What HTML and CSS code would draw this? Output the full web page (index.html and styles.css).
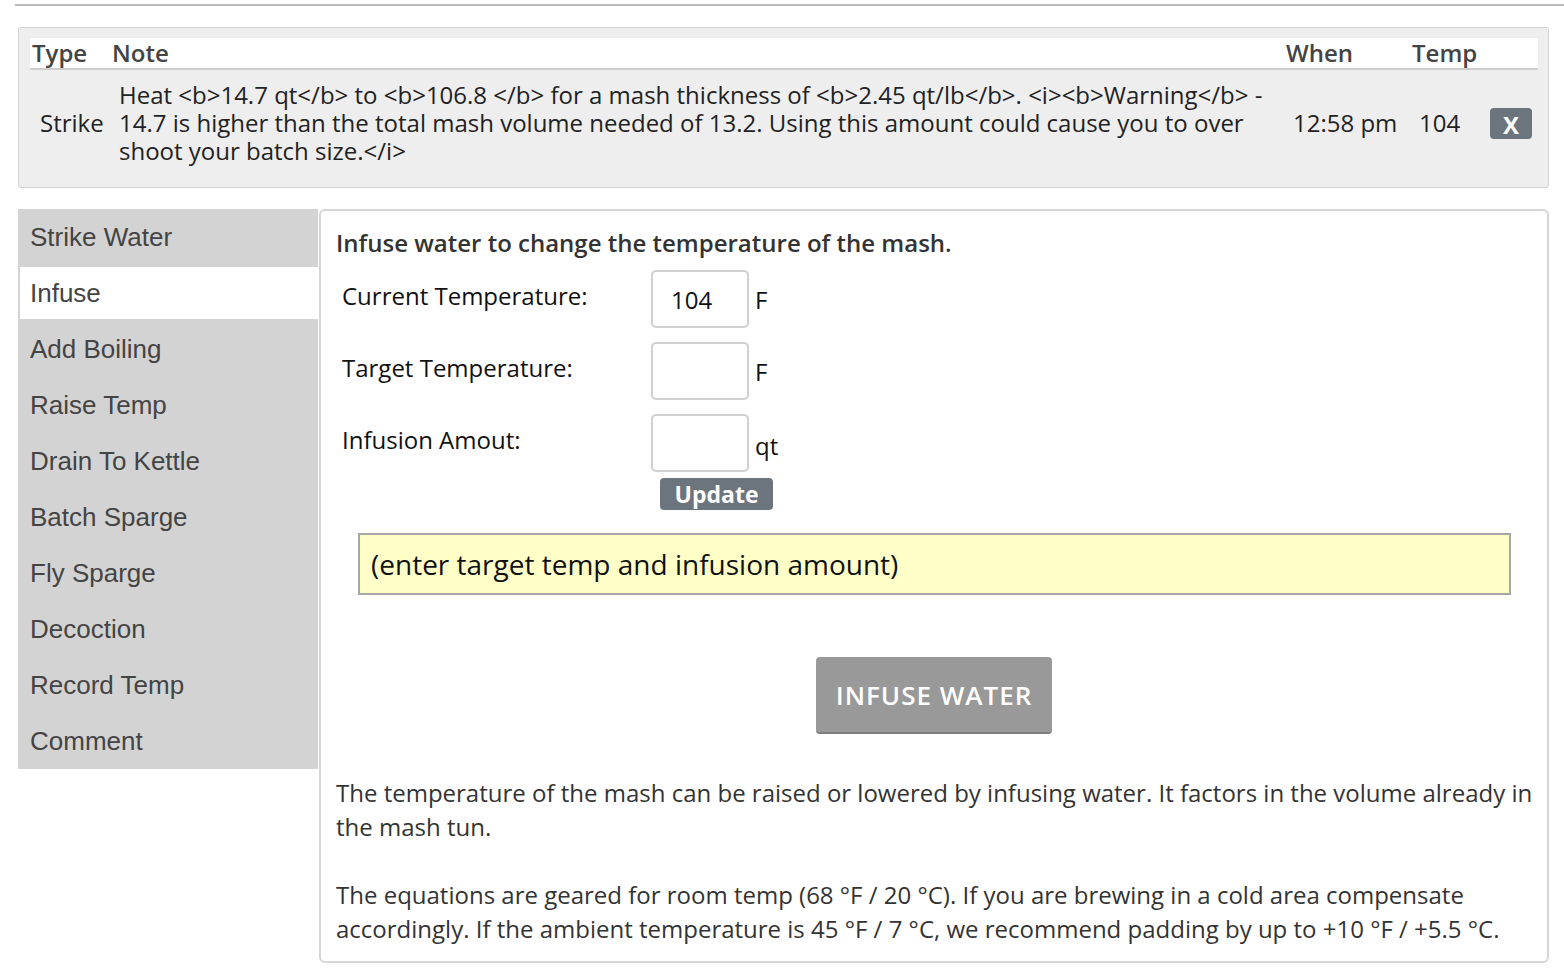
FILE: index.html
```html
<!DOCTYPE html>
<html lang="en">
<head>
    <meta charset="UTF-8">
    <title>Mash Steps</title>
    <link rel="stylesheet" href="styles.css">
</head>
<body>
    <div class="top-rule"></div>

    <!-- Step log -->
    <div class="log">
        <table class="log-table">
            <colgroup>
                <col class="c-type">
                <col class="c-note">
                <col class="c-when">
                <col class="c-temp">
                <col class="c-del">
            </colgroup>
            <thead>
                <tr>
                    <th>Type</th>
                    <th>Note</th>
                    <th>When</th>
                    <th>Temp</th>
                    <th></th>
                </tr>
            </thead>
            <tbody>
                <tr>
                    <td>Strike</td>
                    <td>Heat &lt;b&gt;14.7 qt&lt;/b&gt; to &lt;b&gt;106.8 &lt;/b&gt; for a mash thickness of &lt;b&gt;2.45 qt/lb&lt;/b&gt;. &lt;i&gt;&lt;b&gt;Warning&lt;/b&gt; - 14.7 is higher than the total mash volume needed of 13.2. Using this amount could cause you to over shoot your batch size.&lt;/i&gt;</td>
                    <td>12:58 pm</td>
                    <td>104</td>
                    <td><button type="button" class="del-btn">X</button></td>
                </tr>
            </tbody>
        </table>
    </div>

    <div class="work">
        <!-- Step menu -->
        <ul class="steps">
            <li>Strike Water</li>
            <li class="active">Infuse</li>
            <li>Add Boiling</li>
            <li>Raise Temp</li>
            <li>Drain To Kettle</li>
            <li>Batch Sparge</li>
            <li>Fly Sparge</li>
            <li>Decoction</li>
            <li>Record Temp</li>
            <li>Comment</li>
        </ul>

        <!-- Infuse panel -->
        <div class="panel">
            <h3>Infuse water to change the temperature of the mash.</h3>

            <form class="calc">
                <div class="row">
                    <label for="cur-temp">Current Temperature:</label>
                    <input type="text" id="cur-temp" value="104">
                    <span class="unit">F</span>
                </div>
                <div class="row">
                    <label for="target-temp">Target Temperature:</label>
                    <input type="text" id="target-temp">
                    <span class="unit">F</span>
                </div>
                <div class="row">
                    <label for="amount">Infusion Amout:</label>
                    <input type="text" id="amount">
                    <span class="unit unit-low">qt</span>
                </div>
                <button type="button" class="update-btn">Update</button>
            </form>

            <div class="result">(enter target temp and infusion amount)</div>

            <div class="action">
                <button type="button" class="infuse-btn">INFUSE WATER</button>
            </div>

            <p>The temperature of the mash can be raised or lowered by infusing water. It factors in the volume already in the mash tun.</p>
            <p>The equations are geared for room temp (68 °F / 20 °C). If you are brewing in a cold area compensate accordingly. If the ambient temperature is 45 °F / 7 °C, we recommend padding by up to +10 °F / +5.5 °C.</p>
        </div>
    </div>
</body>
</html>
```

FILE: styles.css
```css
* {
    margin: 0;
    padding: 0;
    box-sizing: border-box;
}

body {
    font-family: "Open Sans", sans-serif;
    font-size: 24px;
    color: #333;
    background: #fff;
    padding: 4px 15px 0 18px;
}

.top-rule {
    border-top: 2px solid #bbb;
    margin-left: -3px;
    margin-right: -15px;
}

/* log table */
.log {
    margin-top: 21px;
    background-color: #eee;
    border: 1px solid #d2d2d2;
    border-radius: 3px;
    padding: 10px 11px;
}

.log-table {
    width: 100%;
    table-layout: fixed;
    border-collapse: collapse;
}

.c-type { width: 80px; }
.c-note { width: 1174px; }
.c-when { width: 126px; }
.c-temp { width: 71px; }
.c-del { width: 57px; }

.log-table th {
    background-color: #fff;
    border-bottom: 2px solid #ccc;
    text-align: left;
    font-weight: 600;
    color: #444;
    line-height: 30px;
    padding: 0 2px;
}

.log-table td {
    color: #222;
    line-height: 28px;
    padding: 11px 9px 12px 9px;
    vertical-align: middle;
}

.log-table td:first-child {
    padding-left: 10px;
}

.del-btn {
    width: 42px;
    height: 31px;
    background-color: #6c757d;
    color: #fff;
    border: none;
    border-radius: 4px;
    font-family: "Open Sans", sans-serif;
    font-size: 24px;
    font-weight: 700;
    display: block;
}

/* main area */
.work {
    margin-top: 21px;
    display: flex;
    align-items: flex-start;
}

.steps {
    list-style: none;
    width: 300px;
    flex-shrink: 0;
    background-color: #d3d3d3;
}

.steps li {
    height: 56px;
    padding-left: 10px;
    border: 2px solid #d3d3d3;
    border-right: 0;
    display: flex;
    align-items: center;
    font-family: "Liberation Sans", Arial, sans-serif;
    font-size: 26px;
    color: #444;
}

.steps li.active {
    background-color: #fff;
}

.panel {
    flex: 1;
    margin-left: 1px;
    border: 2px solid #d6d6d6;
    border-radius: 6px;
    padding: 17px 8px 14px 15px;
    min-height: 754px;
}

.panel h3 {
    font-size: 24px;
    font-weight: 600;
    line-height: 30px;
    color: #333;
}

.calc {
    margin-top: 12px;
    padding-left: 6px;
}

.row {
    display: flex;
    align-items: center;
    margin-bottom: 14px;
    color: #111;
}

.row label {
    width: 309px;
    align-self: flex-start;
    padding-top: 11px;
    line-height: 30px;
}

.row input {
    width: 98px;
    height: 58px;
    border: 2px solid #d0d0d0;
    border-radius: 5px;
    padding-left: 18px;
    font-family: "Open Sans", sans-serif;
    font-size: 24px;
    color: #111;
}

.unit {
    margin-left: 6px;
}

.unit-low {
    padding-top: 4px;
}

.update-btn {
    display: block;
    margin: -8px 0 0 318px;
    width: 113px;
    height: 32px;
    background-color: #6c757d;
    color: #fff;
    border: none;
    border-radius: 4px;
    font-family: "Open Sans", sans-serif;
    font-size: 23px;
    font-weight: 700;
    line-height: 32px;
}

.result {
    margin: 23px 28px 0 22px;
    background-color: #ffffc8;
    border: 2px solid #a6a6a6;
    padding: 11px;
    font-size: 28px;
    line-height: 36px;
    color: #111;
}

.action {
    text-align: center;
    margin-top: 62px;
    margin-left: -15px;
    margin-right: -8px;
}

.infuse-btn {
    width: 236px;
    height: 77px;
    background-color: #999;
    border: none;
    border-bottom: 2px solid #7d7d7d;
    border-radius: 4px;
    color: #fff;
    font-family: "Open Sans", sans-serif;
    font-size: 26px;
    font-weight: 600;
    letter-spacing: 1px;
}

.panel p {
    line-height: 34px;
    color: #333;
    margin-top: 42px;
}

.panel p + p {
    margin-top: 34px;
}
```
